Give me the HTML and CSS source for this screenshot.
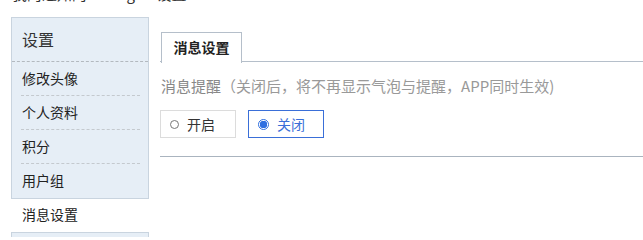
FILE: index.html
```html
<!DOCTYPE html>
<html lang="zh-CN">
<head>
<meta charset="utf-8">
<title>设置</title>
<link rel="stylesheet" href="styles.css">
</head>
<body>
<div class="crumb">我的通知的setting — 设置</div>
<div class="wrap">
  <aside class="side">
    <div class="side-title">设置</div>
    <ul class="menu">
      <li class="item dash">修改头像</li>
      <li class="item dash">个人资料</li>
      <li class="item dash">积分</li>
      <li class="item">用户组</li>
      <li class="item active">消息设置</li>
      <li class="item tail"></li>
    </ul>
  </aside>
  <main class="main">
    <div class="tabs"><span class="tab">消息设置</span></div>
    <p class="desc"><span class="label">消息提醒</span>（关闭后，将不再显示气泡与提醒，APP同时生效)</p>
    <div class="radios">
      <label class="radio"><span class="dot"></span>开启</label>
      <label class="radio on"><span class="dot"></span>关闭</label>
    </div>
    <div class="rule"></div>
  </main>
</div>
</body>
</html>
```
FILE: styles.css
```css
* { box-sizing: border-box; }
html, body { margin: 0; padding: 0; background: #fff; }
body {
  font-family: "Noto Sans CJK SC", "Noto Sans", "Liberation Sans", sans-serif;
  color: #333;
  height: 237px;
  overflow: hidden;
}
.crumb {
  height: 18px;
  margin-top: -15px;
  padding-left: 12px;
  font-size: 15px;
  line-height: 18px;
  color: #333;
  white-space: nowrap;
}
.wrap {
  display: flex;
  gap: 11px;
  padding-left: 11px;
  margin-top: 14px;
}
.side {
  width: 138px;
  flex: none;
  background: #e6eef6;
  border: 1px solid #c9d4df;
  border-bottom: none;
  height: 220px;
}
.side-title {
  height: 44px;
  padding-left: 10px;
  font-size: 16px;
  line-height: 43px;
  color: #333;
  border-bottom: 1px dashed #b3b9bf;
}
.menu { list-style: none; margin: 0; padding: 0; }
.item {
  height: 34px;
  padding-left: 10px;
  font-size: 14px;
  line-height: 33px;
  color: #222;
  position: relative;
}
.item.dash::after {
  content: "";
  position: absolute;
  left: 9px;
  right: 8px;
  bottom: 0;
  border-bottom: 1px dashed #c4c9ce;
}
.item.active {
  background: #fff;
  margin: 0 -1px;
  padding-left: 11px;
  border-top: 1px solid #c9d4df;
  border-bottom: 1px solid #c9d4df;
  height: 35px;
  line-height: 31px;
}
.item.tail { height: 5px; }
.main { flex: 1; min-width: 0; padding-top: 14px; }
.tabs {
  height: 31px;
  border-bottom: 1px solid #b5bfca;
  padding-left: 1px;
}
.tab {
  display: inline-block;
  width: 81px;
  height: 31px;
  border: 1px solid #b5bfca;
  border-bottom: none;
  background: #fff;
  font-size: 14px;
  font-weight: bold;
  line-height: 29px;
  color: #222;
  text-align: center;
  position: relative;
  top: 1px;
}
.desc {
  margin: 13px 0 0 0;
  font-size: 15px;
  line-height: 22px;
  color: #999;
  padding-left: 1px;
}
.desc .label { color: #888; }
.radios {
  display: flex;
  gap: 12px;
  margin-top: 13px;
}
.radio {
  display: flex;
  align-items: center;
  width: 76px;
  height: 28px;
  border: 1px solid #dcdcdc;
  padding-left: 9px;
  font-size: 14px;
  color: #333;
}
.dot {
  width: 9px;
  height: 9px;
  border: 1px solid #777;
  border-radius: 50%;
  margin-right: 8px;
  flex: none;
}
.radio.on { border-color: #3a6fd8; color: #3a6fd8; }
.radio.on .dot {
  width: 11px;
  height: 11px;
  border: 1px solid #2f6fe0;
  background: radial-gradient(circle, #2f6fe0 0 3.5px, #fff 4px);
}
.rule {
  margin-top: 18px;
  border-top: 1px solid #aab4bf;
}
```
